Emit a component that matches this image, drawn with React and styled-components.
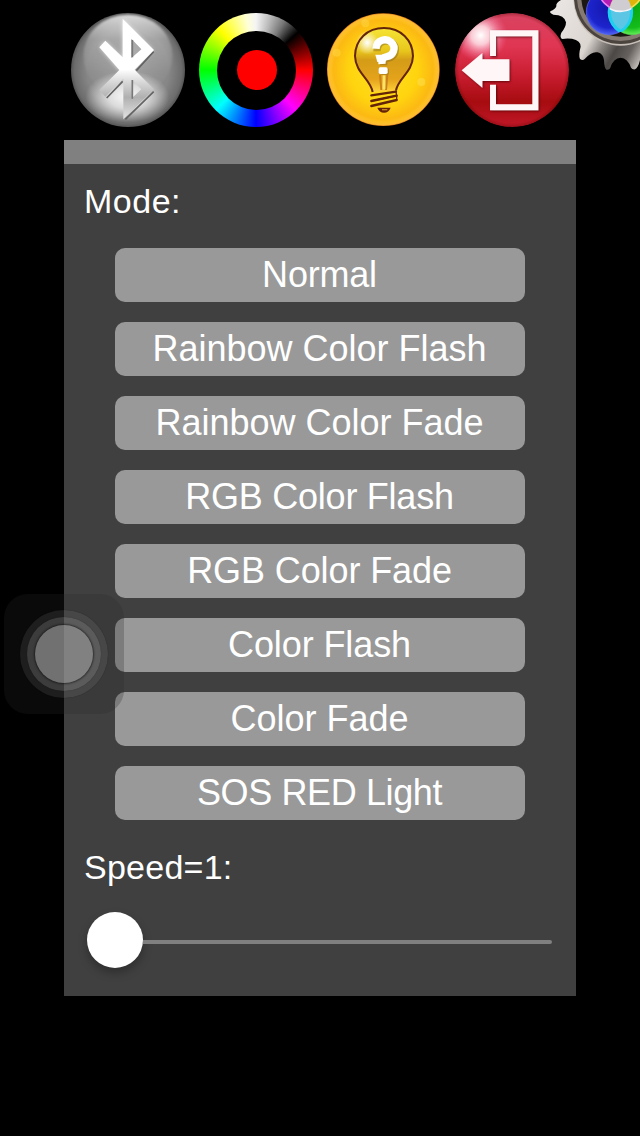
import React, {useState} from 'react'
import styled, {createGlobalStyle} from 'styled-components'

const modes = [
    {name: 'Normal', tracking: -0.2},
    {name: 'Rainbow Color Flash', tracking: 0},
    {name: 'Rainbow Color Fade', tracking: 0},
    {name: 'RGB Color Flash', tracking: -0.25},
    {name: 'RGB Color Fade', tracking: -0.1},
    {name: 'Color Flash', tracking: -0.1},
    {name: 'Color Fade', tracking: 0},
    {name: 'SOS RED Light', tracking: -0.38},
]

const BluetoothIcon = () => (
    <Icon viewBox="0 0 384 384">
        <defs>
            <radialGradient id="btBall" cx="0.5" cy="0.5" r="0.5">
                <stop offset="0" stopColor="#9c9c9c" />
                <stop offset="0.72" stopColor="#868686" />
                <stop offset="0.94" stopColor="#6c6c6c" />
                <stop offset="1" stopColor="#555" />
            </radialGradient>
            <linearGradient id="btTop" x1="0" y1="0" x2="0" y2="1">
                <stop offset="0" stopColor="#fff" stopOpacity="0.75" />
                <stop offset="0.3" stopColor="#fff" stopOpacity="0.25" />
                <stop offset="0.7" stopColor="#fff" stopOpacity="0.05" />
                <stop offset="1" stopColor="#fff" stopOpacity="0" />
            </linearGradient>
            <radialGradient id="btGlow" cx="0.5" cy="0.5" r="0.5">
                <stop offset="0" stopColor="#fff" stopOpacity="0.95" />
                <stop offset="0.45" stopColor="#fff" stopOpacity="0.7" />
                <stop offset="1" stopColor="#fff" stopOpacity="0" />
            </radialGradient>
            <linearGradient id="btRune" x1="0" y1="40" x2="0" y2="340" gradientUnits="userSpaceOnUse">
                <stop offset="0" stopColor="#fff" />
                <stop offset="0.5" stopColor="#fff" />
                <stop offset="0.62" stopColor="#dadada" />
                <stop offset="0.78" stopColor="#b0b0b0" />
                <stop offset="1" stopColor="#e4e4e4" />
            </linearGradient>
            <filter id="btBlur" x="-20%" y="-20%" width="140%" height="140%">
                <feGaussianBlur stdDeviation="7" />
            </filter>
            <filter id="btSoft">
                <feGaussianBlur stdDeviation="3" />
            </filter>
        </defs>
        <circle cx="192" cy="192" r="171" fill="url(#btBall)" />
        <ellipse cx="192" cy="150" rx="134" ry="124" fill="url(#btTop)" filter="url(#btSoft)" />
        <ellipse cx="190" cy="272" rx="126" ry="78" fill="url(#btGlow)" />
        <path d="M176 40L266 132L210 190L166 192L108 124L124 106L176 158Z" fill="#fff" opacity="0.7" filter="url(#btBlur)" />
        <path d="M269 137L217 194M269 257L184 340M176 226L128 276" stroke="#636363" strokeWidth="5" fill="none" />
        <path fillRule="evenodd" d="M176 38L270 132L212 191L270 250L178 340V218L124 272L106 252L166 192L106 124L124 104L176 154ZM202 100V156L232 130ZM204 222V276L232 250Z" fill="url(#btRune)" />
        <path d="M202 98V156L232 130Z" fill="#aaa" />
        <path d="M205 102V154M205 222V278" stroke="#777" strokeWidth="5" />
    </Icon>
)

const BulbIcon = () => (
    <Icon viewBox="0 0 384 384">
        <defs>
            <radialGradient id="coin" cx="0.5" cy="0.5" r="0.5">
                <stop offset="0" stopColor="#ffe020" />
                <stop offset="0.6" stopColor="#ffd40f" />
                <stop offset="0.88" stopColor="#fcb913" />
                <stop offset="0.94" stopColor="#fdc024" />
                <stop offset="0.98" stopColor="#fdbb35" />
                <stop offset="1" stopColor="#d97b14" />
            </radialGradient>
            <linearGradient id="glass" x1="0" y1="0" x2="0" y2="1">
                <stop offset="0" stopColor="#f6e536" />
                <stop offset="0.36" stopColor="#e8c61c" />
                <stop offset="0.5" stopColor="#d49c17" />
                <stop offset="0.8" stopColor="#e5a31b" />
                <stop offset="1" stopColor="#ffd23a" />
            </linearGradient>
            <radialGradient id="glint">
                <stop offset="0" stopColor="#fff" />
                <stop offset="1" stopColor="#fff" stopOpacity="0" />
            </radialGradient>
        </defs>
        <circle cx="190" cy="191" r="169" fill="url(#coin)" />
        <circle cx="50" cy="140" r="12" fill="#ffe45a" opacity="0.35" />
        <circle cx="136" cy="52" r="12" fill="#ffe45a" opacity="0.35" />
        <circle cx="304" cy="228" r="12" fill="#ffe45a" opacity="0.45" />
        <path d="M158 258C152 220 106 200 105 150C106 100 142 66 192 66C242 66 278 102 279 150C278 200 232 218 228 254Z" fill="url(#glass)" />
        <ellipse cx="142" cy="110" rx="34" ry="36" fill="url(#glint)" />
        <path d="M180 206L184 252M202 206L198 252" stroke="#c8801a" strokeWidth="6" />
        <path d="M192 208V250" stroke="#ffe26a" strokeWidth="8" />
        <path d="M158 258C152 220 106 200 105 150C106 100 142 66 192 66C242 66 278 102 279 150C278 200 232 218 228 254" fill="none" stroke="#64240a" strokeWidth="6" />
        <path d="M154 268L228 257M154 285L230 269M154 300L230 282" stroke="#64240a" strokeWidth="7" fill="none" strokeLinecap="round" />
        <path d="M228 257L230 269L154 285M230 269V282" stroke="#64240a" strokeWidth="4" fill="none" />
        <path d="M172 305H212Q206 320 192 320Q178 320 172 305Z" fill="#64240a" />
        <path d="M186 311H202" stroke="#c98220" strokeWidth="4" />
        <path d="M166 132C166 98 200 96 213 108C230 126 218 150 200 152C186 154 186 160 186 174" stroke="#8c6d20" strokeWidth="22" fill="none" opacity="0.5" transform="translate(5 4)" />
        <path d="M168 128C170 98 200 97 213 108C232 126 218 150 200 152Q184 154 186 174" stroke="#fff" strokeWidth="22" fill="none" />
        <path d="M166 146H190V168H172Z" fill="#fff" />
        <rect x="181" y="187" width="26" height="20" rx="5" fill="#8c6d20" opacity="0.5" />
        <rect x="176" y="184" width="27" height="20" rx="5" fill="#fff" />
    </Icon>
)

const ExitIcon = () => (
    <Icon viewBox="0 0 384 384">
        <defs>
            <linearGradient id="exitBall" x1="0" y1="0" x2="0" y2="1">
                <stop offset="0" stopColor="#d94461" />
                <stop offset="0.3" stopColor="#e03552" />
                <stop offset="0.55" stopColor="#c81c2f" />
                <stop offset="0.78" stopColor="#a60c10" />
                <stop offset="1" stopColor="#c01828" />
            </linearGradient>
            <radialGradient id="exitEdge">
                <stop offset="0.93" stopColor="#600" stopOpacity="0" />
                <stop offset="1" stopColor="#500" stopOpacity="0.35" />
            </radialGradient>
            <radialGradient id="exitShine">
                <stop offset="0" stopColor="#fff" />
                <stop offset="0.35" stopColor="#ffe6ec" stopOpacity="0.85" />
                <stop offset="1" stopColor="#f7a" stopOpacity="0" />
            </radialGradient>
            <clipPath id="exitClip"><circle cx="192" cy="192" r="171" /></clipPath>
            <filter id="exitShadow" x="-20%" y="-20%" width="140%" height="140%">
                <feDropShadow dx="3" dy="3" stdDeviation="3" floodColor="#400" floodOpacity="0.75" />
            </filter>
        </defs>
        <g clipPath="url(#exitClip)">
            <circle cx="192" cy="192" r="171" fill="url(#exitBall)" />
            <circle cx="192" cy="192" r="171" fill="url(#exitEdge)" />
            <circle cx="98" cy="88" r="80" fill="url(#exitShine)" />
        </g>
        <g filter="url(#exitShadow)" fill="#fff6f7">
            <path d="M126 73H271V313H126V236H144V295H253V91H144V150H126Z" />
            <path d="M41 193L103 141V160H184V225H103V245Z" />
        </g>
    </Icon>
)

const GearIcon = () => (
    <Gear viewBox="0 0 300 240">
        <defs>
            <linearGradient id="metal" x1="40" y1="60" x2="300" y2="200" gradientUnits="userSpaceOnUse">
                <stop offset="0" stopColor="#e8e4e1" />
                <stop offset="0.42" stopColor="#dcd6d1" />
                <stop offset="0.56" stopColor="#8a8581" />
                <stop offset="0.7" stopColor="#4b4846" />
                <stop offset="0.84" stopColor="#66615e" />
                <stop offset="1" stopColor="#d0cac5" />
            </linearGradient>
            <radialGradient id="blueDisc" cx="0.5" cy="0.4" r="0.6">
                <stop offset="0" stopColor="#1515a8" />
                <stop offset="0.75" stopColor="#1c24cc" />
                <stop offset="1" stopColor="#4f62f5" />
            </radialGradient>
            <radialGradient id="greenDisc" cx="0.5" cy="0.4" r="0.6">
                <stop offset="0" stopColor="#0aa414" />
                <stop offset="0.75" stopColor="#14bc1a" />
                <stop offset="1" stopColor="#62ee58" />
            </radialGradient>
            <clipPath id="blueClip"><circle cx="207" cy="36" r="68" /></clipPath>
            <clipPath id="greenClip"><circle cx="276" cy="36" r="68" /></clipPath>
        </defs>
        <path d="M63 0Q47 8 49 19Q46 28 31 34Q28 40 40 44Q74 45 78 67Q78 82 64 98Q58 113 67 117Q78 114 96 116Q123 122 122 140Q115 165 120 177Q128 183 134 177Q155 153 173 157Q190 162 192 180Q193 205 199 209Q208 211 211 203Q220 174 242 173Q263 174 273 203Q277 209 285 208Q294 205 300 180V0Z" fill="url(#metal)" />
        <circle cx="242" cy="-5" r="142" fill="#c7bfb7" />
        <circle cx="242" cy="-8" r="140" fill="#4a433e" />
        <circle cx="242" cy="-8" r="131" fill="#857b73" />
        <circle cx="242" cy="-8" r="118" fill="#1b1713" />
        <circle cx="276" cy="36" r="68" fill="url(#greenDisc)" stroke="#57dc50" strokeWidth="2" />
        <circle cx="207" cy="36" r="68" fill="url(#blueDisc)" stroke="#5d70f5" strokeWidth="2" />
        <g clipPath="url(#blueClip)">
            <circle cx="276" cy="36" r="68" fill="#5cc6e4" stroke="#1fd0ee" strokeWidth="10" />
            <circle cx="242" cy="-38" r="68" fill="#b41cb8" stroke="#ee7fee" strokeWidth="5" />
        </g>
        <g clipPath="url(#greenClip)">
            <circle cx="207" cy="36" r="68" fill="none" stroke="#1fd0ee" strokeWidth="9" />
            <circle cx="242" cy="-38" r="68" fill="#dcb40a" stroke="#f5dc50" strokeWidth="5" />
            <g clipPath="url(#blueClip)">
                <circle cx="242" cy="-34" r="68" fill="#cfcdd2" stroke="#f4f4f8" strokeWidth="5" />
            </g>
        </g>
    </Gear>
)

export default function App() {
    const [, setMode] = useState(modes[0].name)

    return (
        <Screen>
            <GlobalStyle />
            <Toolbar>
                <ToolButton aria-label="Bluetooth"><BluetoothIcon /></ToolButton>
                <ToolButton aria-label="Color">
                    <ColorWheel><WheelHole><WheelDot /></WheelHole></ColorWheel>
                </ToolButton>
                <ToolButton aria-label="Help"><BulbIcon /></ToolButton>
                <ToolButton aria-label="Exit"><ExitIcon /></ToolButton>
            </Toolbar>
            <GearIcon />
            <Panel>
                <Label $tracking={0.5}>Mode:</Label>
                <ModeList>
                    {modes.map(({name, tracking}) => (
                        <ModeButton key={name} $tracking={tracking} onClick={() => setMode(name)}>{name}</ModeButton>
                    ))}
                </ModeList>
                <Label $tracking={0.25}>Speed=1:</Label>
                <Slider>
                    <Thumb />
                    <Track />
                </Slider>
            </Panel>
            <AssistiveTouch>
                <Ring $size={88} $color="rgba(148, 148, 148, 0.15)">
                    <Ring $size={74} $color="rgba(150, 150, 150, 0.25)">
                        <Ring $size={58} $color="rgba(170, 170, 170, 0.49)" $edge />
                    </Ring>
                </Ring>
            </AssistiveTouch>
        </Screen>
    )
}

const GlobalStyle = createGlobalStyle`
    body {
        margin: 0;
        background: #000;
    }
    * {
        box-sizing: border-box;
    }
`

const Screen = styled.div`
    position: relative;
    width: 640px;
    height: 1136px;
    overflow: hidden;
    background: #000;
    color: #fff;
    font-family: "Liberation Sans", Arial, sans-serif;
`

const Toolbar = styled.div`
    display: flex;
    height: 140px;
    padding: 6px 64px;
`

const ToolButton = styled.button`
    display: flex;
    align-items: center;
    justify-content: center;
    width: 128px;
    height: 128px;
    padding: 0;
    border: 0;
    background: none;
`

const Icon = styled.svg`
    display: block;
    width: 128px;
    height: 128px;
`

const Gear = styled.svg`
    position: absolute;
    top: 0;
    right: 0;
    width: 100px;
    height: 80px;
`

const ColorWheel = styled.div`
    display: flex;
    align-items: center;
    justify-content: center;
    width: 114px;
    height: 114px;
    border-radius: 50%;
    background: conic-gradient(#f4f4f4, #bbb 15deg, #777 30deg, #000 48deg, #f00 90deg, #f0f 135deg, #00f 180deg, #0ff 225deg, #0f0 270deg, #ff0 318deg, #ffffd8 350deg, #f4f4f4);
`

const WheelHole = styled.div`
    display: flex;
    align-items: center;
    justify-content: center;
    width: 79px;
    height: 79px;
    padding-left: 2px;
    border-radius: 50%;
    background: #000;
`

const WheelDot = styled.div`
    width: 40px;
    height: 40px;
    border-radius: 50%;
    background: #f00;
`

const Panel = styled.div`
    width: 512px;
    height: 856px;
    margin: 0 auto;
    padding: 19px 20px 0;
    border-top: 24px solid #808080;
    background: #404040;
`

const Label = styled.div`
    height: 36px;
    font-size: 34px;
    line-height: 36px;
    letter-spacing: ${(props) => props.$tracking}px;
    white-space: nowrap;
`

const ModeList = styled.div`
    display: flex;
    flex-direction: column;
    align-items: center;
    gap: 20px;
    padding: 29px 0;
`

const ModeButton = styled.button`
    width: 410px;
    height: 54px;
    padding: 0 1px 0 0;
    border: 0;
    border-radius: 10px;
    background: #999;
    color: #fff;
    font-family: inherit;
    font-size: 36px;
    line-height: 54px;
    letter-spacing: ${(props) => props.$tracking}px;
    white-space: nowrap;
`

const Slider = styled.div`
    display: flex;
    align-items: center;
    height: 56px;
    margin: 27px 4px 0 3px;
`

const Thumb = styled.div`
    flex: none;
    width: 56px;
    height: 56px;
    border-radius: 50%;
    background: #fff;
    box-shadow: 0 5px 10px rgba(0, 0, 0, 0.28);
`

const Track = styled.div`
    flex: 1;
    height: 4px;
    margin-top: 4px;
    border-radius: 0 2px 2px 0;
    background: #808080;
`

const AssistiveTouch = styled.div`
    position: absolute;
    top: 594px;
    left: 4px;
    display: flex;
    align-items: center;
    justify-content: center;
    width: 120px;
    height: 120px;
    border-radius: 24px;
    background: rgba(40, 40, 40, 0.25);
`

const Ring = styled.div`
    display: flex;
    align-items: center;
    justify-content: center;
    width: ${(props) => props.$size}px;
    height: ${(props) => props.$size}px;
    border-radius: 50%;
    background: ${(props) => props.$color};
    box-shadow: ${(props) => (props.$edge ? '0 0 2px 1px rgba(0, 0, 0, 0.5)' : '0 0 1px rgba(0, 0, 0, 0.4)')};
`
